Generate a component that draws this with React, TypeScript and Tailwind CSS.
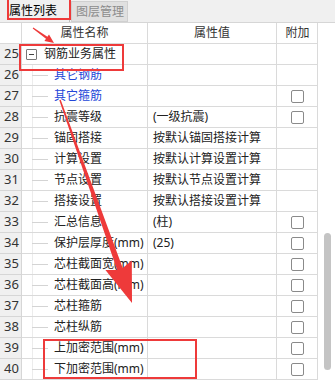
import React from 'react';

// Filas de la tabla de propiedades
interface Row {
  no: number;
  name: string;
  value?: string;
  blue?: boolean;
  check?: boolean;
  group?: boolean;
}

const rows: Row[] = [
  { no: 25, name: '钢筋业务属性', group: true },
  { no: 26, name: '其它钢筋', blue: true },
  { no: 27, name: '其它箍筋', blue: true, check: true },
  { no: 28, name: '抗震等级', value: '(一级抗震)', check: true },
  { no: 29, name: '锚固搭接', value: '按默认锚固搭接计算' },
  { no: 30, name: '计算设置', value: '按默认计算设置计算' },
  { no: 31, name: '节点设置', value: '按默认节点设置计算' },
  { no: 32, name: '搭接设置', value: '按默认搭接设置计算' },
  { no: 33, name: '汇总信息', value: '(柱)', check: true },
  { no: 34, name: '保护层厚度(mm)', value: '(25)', check: true },
  { no: 35, name: '芯柱截面宽(mm)', check: true },
  { no: 36, name: '芯柱截面高(mm)', check: true },
  { no: 37, name: '芯柱箍筋', check: true },
  { no: 38, name: '芯柱纵筋', check: true },
  { no: 39, name: '上加密范围(mm)', check: true },
  { no: 40, name: '下加密范围(mm)', check: true },
];

const font = { fontFamily: '"Noto Sans", "Noto Sans CJK SC", sans-serif' };

const Checkbox: React.FC = () => (
  <span className="block w-[13px] h-[13px] rounded-[2px] border border-[#8a8a8a] bg-white" />
);

const App: React.FC = () => {
  return (
    <div className="relative w-[335px] h-[383px] overflow-hidden bg-white text-[12px] text-[#222]" style={font}>
      {/* pestañas */}
      <div className="flex h-[23px] bg-[#f0f0f0] border-b border-[#d6d6d6]">
        <div className="w-[70px] h-[22px] flex items-center pl-[9px] text-black border-r border-[#bdbdbd]">属性列表</div>
        <div className="w-[57px] h-[21px] mt-[1px] ml-[1px] flex items-center pl-[4px] bg-[#e0e0e0] border border-[#d0d0d0] text-[#8c8c8c]">图层管理</div>
      </div>

      <div className="flex">
        <div className="w-[318px] border-r border-[#dadada]">
          {/* cabecera */}
          <div className="grid grid-cols-[22px_126px_129px_41px] h-[21px] text-[#333]">
            <div className="border-r border-b border-[#dadada]" />
            <div className="border-r border-b border-[#dadada] flex items-center justify-center">属性名称</div>
            <div className="border-r border-b border-[#dadada] flex items-center justify-center">属性值</div>
            <div className="border-b border-[#dadada] flex items-center justify-center">附加</div>
          </div>

          {rows.map((r) => (
            <div key={r.no} className="grid grid-cols-[22px_126px_129px_41px] h-[21px]">
              <div className="bg-[#f0f0f0] border-r border-b border-[#d6d6d6] flex items-center pl-[4px] text-[13px] text-[#333]">
                {r.no}
              </div>
              <div className="relative border-r border-b border-[#dadada] flex items-center whitespace-nowrap">
                {r.group ? (
                  <>
                    <span className="ml-[4px] w-[11px] h-[11px] border border-[#777] rounded-[1px] flex items-center justify-center">
                      <span className="block w-[5px] h-[1px] bg-[#444]" />
                    </span>
                    <span className="ml-[7px] text-[#222]">{r.name}</span>
                  </>
                ) : (
                  <>
                    <span className="absolute left-[10px] top-0 bottom-0 w-px bg-[#ececec]" />
                    <span className="absolute left-[10px] top-[10px] w-[16px] h-px bg-[#d4d4d4]" />
                    <span className={`ml-[32px] ${r.blue ? 'text-[#2346d8]' : 'text-[#222]'}`}>{r.name}</span>
                  </>
                )}
              </div>
              <div className="border-r border-b border-[#dadada] flex items-center pl-[5px] whitespace-nowrap overflow-hidden">
                {r.value}
              </div>
              <div className="border-b border-[#dadada] flex items-center justify-center">
                {r.check && <Checkbox />}
              </div>
            </div>
          ))}
        </div>

        {/* barra de desplazamiento */}
        <div className="w-[17px] relative">
          <div className="absolute left-[6px] top-[210px] w-[7px] h-[137px] rounded-full bg-[#c4c4c4]" />
        </div>
      </div>

      {/* anotaciones en rojo */}
      <div className="absolute left-[7px] top-[-2px] w-[64px] h-[22px] border-2 border-[#ee3a3a]" />
      <div className="absolute left-[19px] top-[44px] w-[105px] h-[27px] border-2 border-[#ee3a3a]" />
      <div className="absolute left-[43px] top-[339px] w-[154px] h-[40px] border-2 border-[#ee3a3a]" />

      <svg className="absolute left-0 top-0 pointer-events-none" width="335" height="383" viewBox="0 0 335 383">
        <polygon
          fill="#ee3a3a"
          points="32.7,28.4 46,38.8 44.4,41.1 54,43 49,34.5 47.4,36.8 33.3,27.6"
        />
        <polygon
          fill="#ee3a3a"
          points="59.3,100.2 117.1,270.1 105.4,270 132,303 131.8,260.6 122.7,268.1 60.7,99.8"
        />
      </svg>
    </div>
  );
};

export default App;
